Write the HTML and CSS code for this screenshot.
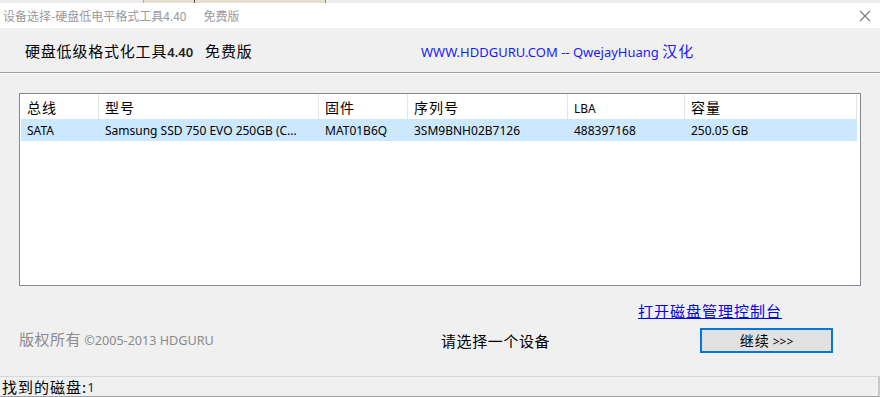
FILE: index.html
```html
<!DOCTYPE html>
<html lang="zh-CN">
<head>
<meta charset="utf-8">
<title>设备选择</title>
<link rel="stylesheet" href="styles.css">
</head>
<body>
<div class="bgstrip"><span class="seg s1"></span><span class="seg s2"></span><span class="seg s3"></span><span class="seg s4"></span></div>
<div class="titlebar">
  <span class="title">设备选择-硬盘低电平格式工具4.40<span class="free">免费版</span></span>
  <svg class="close" width="12" height="12" viewBox="0 0 12 12"><path d="M1 1 L11 11 M11 1 L1 11" stroke="#7a7a7a" stroke-width="1.1" fill="none"/></svg>
</div>
<div class="header">
  <div class="appname">硬盘低级格式化工具<b class="ver">4.40</b><span class="free2">免费版</span></div>
  <div class="site">WWW.HDDGURU.COM -- QwejayHuang <span class="cjk">汉化</span></div>
</div>
<div class="content">
  <div class="listbox">
    <div class="row head">
      <div class="c c1 cjk">总线</div>
      <div class="c c2 cjk">型号</div>
      <div class="c c3 cjk">固件</div>
      <div class="c c4 cjk">序列号</div>
      <div class="c c5">LBA</div>
      <div class="c c6 cjk">容量</div>
    </div>
    <div class="row data">
      <div class="c c1">SATA</div>
      <div class="c c2">Samsung SSD 750 EVO 250GB (C...</div>
      <div class="c c3">MAT01B6Q</div>
      <div class="c c4">3SM9BNH02B7126</div>
      <div class="c c5">488397168</div>
      <div class="c c6">250.05 GB</div>
    </div>
  </div>
  <div class="linkrow"><a class="mgmt" href="#">打开磁盘管理控制台</a></div>
  <div class="bottomrow">
    <div class="copy"><span class="cjk">版权所有</span> ©2005-2013 HDGURU</div>
    <div class="prompt">请选择一个设备</div>
    <button class="next"><span class="cjk">继续</span> &gt;&gt;&gt;</button>
  </div>
</div>
<div class="status"><span class="cjk">找到的磁盘:</span><span class="count">1</span></div>
</body>
</html>
```
FILE: styles.css
```css
html, body {
  margin: 0;
  padding: 0;
}
body {
  width: 880px;
  height: 397px;
  overflow: hidden;
  background: #f0f0f0;
  font-family: "Noto Sans", "Noto Sans CJK SC", sans-serif;
  color: #000;
  display: flex;
  flex-direction: column;
}
.cjk {
  font-family: "Noto Sans CJK SC", sans-serif;
}
.bgstrip {
  height: 3px;
  flex: none;
  display: flex;
  background: #e8e8e8;
}
.seg { display: block; height: 3px; }
.s1 { width: 143px; background: #ececec; border-right: 1px solid #a8a8a8; }
.s2 { width: 50px; background: #e4e1d2; border-right: 1px solid #555; }
.s3 { width: 130px; background: #e4e1d2; border-right: 1px solid #888; }
.s4 { flex: 1; background: #eeeeee; }
.titlebar {
  height: 25px;
  flex: none;
  background: #fff;
  display: flex;
  align-items: center;
  justify-content: space-between;
  padding: 0 9px 0 3px;
}
.title {
  font-family: "Noto Sans CJK SC", sans-serif;
  font-size: 12px;
  color: #9a9a9a;
  line-height: 16px;
}
.free { margin-left: 17px; }
.close { display: block; margin-top: 1px; }
.header {
  height: 44px;
  flex: none;
  border-bottom: 1px solid #a0a0a0;
  box-shadow: 0 1px 0 #ffffff;
  display: flex;
  align-items: center;
  padding-left: 25px;
}
.appname {
  font-family: "Noto Sans CJK SC", sans-serif;
  font-size: 15px;
  letter-spacing: 0.8px;
  width: 396px;
  line-height: 20px;
  margin-top: 2px;
}
.ver {
  font-family: "Noto Sans", sans-serif;
  font-weight: 600;
  font-size: 13px;
  letter-spacing: 0;
  color: #222;
}
.free2 { margin-left: 12px; }
.site {
  color: #1a1aff;
  font-size: 13px;
  line-height: 20px;
  margin-top: 2px;
}
.site .cjk { font-size: 15px; letter-spacing: 1px; }
.content {
  flex: 1;
  padding: 20px 20px 0 19px;
}
.listbox {
  width: 838px;
  height: 191px;
  background: #fff;
  border: 1px solid #828790;
  padding: 0 1px;
}
.row {
  display: flex;
  width: 836px;
}
.row.head { height: 25px; }
.row.data { height: 22px; background: #cce8ff; }
.c {
  padding-left: 6px;
  box-sizing: border-box;
  display: flex;
  align-items: center;
  white-space: nowrap;
  overflow: hidden;
}
.head .c {
  border-right: 1px solid #e5e5e5;
  font-size: 14px;
  letter-spacing: 1px;
}
.head .c5 { font-size: 12px; letter-spacing: 0; padding-top: 3px; }
.data .c { font-size: 12px; }
.c1 { width: 78px; }
.c2 { width: 220px; }
.c3 { width: 89px; }
.c4 { width: 160px; }
.c5 { width: 117px; }
.c6 { width: 172px; }
.linkrow {
  height: 34px;
  display: flex;
  align-items: flex-end;
  padding-left: 619px;
}
.mgmt {
  font-family: "Noto Sans CJK SC", sans-serif;
  font-size: 15px;
  letter-spacing: 1px;
  color: #0000ee;
  text-decoration: underline;
  line-height: 19px;
}
.bottomrow {
  display: flex;
  align-items: center;
  height: 40px;
}
.copy {
  width: 422px;
  color: #8a8a8a;
  font-size: 12.6px;
  line-height: 18px;
}
.copy .cjk { font-size: 15px; letter-spacing: 0.5px; }
.prompt {
  width: 259px;
  font-family: "Noto Sans CJK SC", sans-serif;
  font-size: 15px;
  letter-spacing: 0.6px;
}
.next {
  width: 133px;
  height: 25px;
  border: 2px solid #0078d7;
  background: #e1e1e1;
  font-family: "Noto Sans", sans-serif;
  font-size: 12px;
  padding: 0;
  color: #000;
}
.next .cjk { font-size: 14px; letter-spacing: 1px; }
.status {
  flex: none;
  height: 19px;
  border-top: 1px solid #d7d7d7;
  border-bottom: 1px solid #a0a0a0;
  border-right: 2px solid #c8c8c8;
  padding-left: 2px;
  display: flex;
  align-items: center;
  font-size: 15px;
}
.status .cjk { letter-spacing: 1px; }
.count { font-size: 13px; color: #1b2a4a; }
```
